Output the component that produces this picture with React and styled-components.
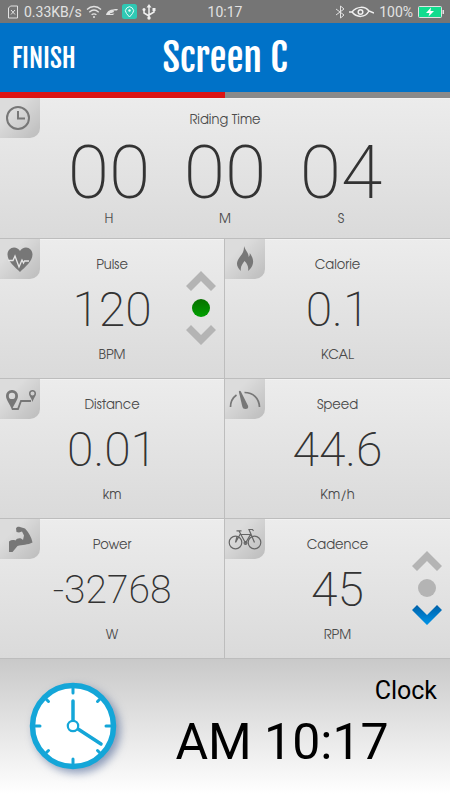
import styled, { createGlobalStyle } from "styled-components";

const GlobalStyle = createGlobalStyle`
  * {
    box-sizing: border-box;
  }

  body {
    margin: 0;
    background: #fff;
    font-family: Roboto, "Liberation Sans", sans-serif;
  }
`;

const Page = styled.div`
  display: flex;
  flex-direction: column;
  min-height: 100vh;
`;

const StatusBar = styled.div`
  display: grid;
  grid-template-columns: 1fr auto 1fr;
  align-items: center;
  height: 23px;
  padding: 0 6px;
  background: #757575;
  color: #e2e2e2;
  font-size: 14px;
  line-height: 22px;
`;

const StatusGroup = styled.div`
  display: flex;
  align-items: center;
  justify-content: ${({ $end }) => ($end ? "flex-end" : "flex-start")};
  gap: ${({ $end }) => ($end ? 3 : 4)}px;

  svg {
    flex: none;
  }
`;

const StatusText = styled.span`
  margin: 0 ${({ $side }) => $side || 0}px;
  white-space: nowrap;
`;

const Header = styled.header`
  display: grid;
  grid-template-columns: 1fr auto 1fr;
  align-items: center;
  height: 69px;
  padding: 0 12px;
  background: #0072c8;
  color: #fff;
`;

const FinishButton = styled.button`
  justify-self: start;
  padding: 0;
  border: none;
  background: none;
  color: inherit;
  font-family: "Fjalla One", "Roboto Condensed", Roboto, sans-serif;
  font-size: 26px;
  font-weight: 400;
  line-height: 32px;
  cursor: pointer;
`;

const Title = styled.h1`
  margin: 0;
  font-family: "Fjalla One", "Roboto Condensed", Roboto, sans-serif;
  font-size: 38px;
  font-weight: 400;
  line-height: 48px;
`;

const PageIndicator = styled.div`
  display: grid;
  grid-template-columns: 1fr 1fr;
  height: 6px;
`;

const PageMark = styled.span`
  background: ${({ $active }) => ($active ? "#dc1414" : "#8a8a8a")};
`;

const Grid = styled.main`
  display: grid;
  grid-template-columns: 1fr 1fr;
`;

const Cell = styled.section`
  display: grid;
  grid-template-columns: 40px 1fr 40px;
  grid-column: ${({ $wide }) => ($wide ? "1 / -1" : "auto")};
  min-height: ${({ $wide }) => ($wide ? 141 : 140)}px;
  border-bottom: 1px solid #bdbdbd;
  background: linear-gradient(#ececec, #dadada);
  box-shadow: inset 0 1px #f2f2f2;

  &:nth-child(even) {
    border-right: 1px solid #bdbdbd;
  }
`;

const Badge = styled.div`
  display: flex;
  align-items: center;
  justify-content: center;
  width: 40px;
  height: 40px;
  border-bottom-right-radius: 10px;
  background: linear-gradient(135deg, #dcdcdc 30%, #bcbcbc);
`;

const Readout = styled.div`
  display: flex;
  flex-direction: column;
  align-items: center;
  padding-top: ${({ $wide }) => ($wide ? 11 : 15)}px;
  color: #333;
`;

const Label = styled.div`
  color: #4c4c4c;
  font-family: "ITC Avant Garde Gothic", "URW Gothic", "TeX Gyre Adventor", "Century Gothic", Inter, sans-serif;
  font-size: 13px;
  font-weight: 300;
  line-height: 22px;
`;

const Value = styled.div`
  height: 68px;
  font-size: ${({ $small }) => ($small ? 39 : 48)}px;
  font-weight: 200;
  line-height: 68px;
`;

const TimeRow = styled.div`
  display: grid;
  grid-template-columns: repeat(3, 116px);
  text-align: center;
`;

const TimeValue = styled.div`
  height: 77px;
  font-size: 75px;
  font-weight: 200;
  line-height: 82px;
`;

const Trend = styled.div`
  display: flex;
  flex-direction: column;
  align-items: center;
  justify-content: center;
  gap: 8px;
  padding: 0 6px 2px 0;
`;

const Footer = styled.footer`
  display: flex;
  flex: 1;
  gap: 10px;
  min-height: 141px;
  padding: 16px 13px 0 29px;
  background: linear-gradient(#c9c9c9, #fff 96%);
`;

const ClockPanel = styled.div`
  display: flex;
  flex: 1;
  flex-direction: column;
  color: #000;
`;

const ClockLabel = styled.div`
  font-size: 25px;
  line-height: 32px;
  text-align: right;
`;

const ClockTime = styled.div`
  font-size: 50px;
  line-height: 70px;
  text-align: center;
  white-space: nowrap;
`;

const ClockFace = styled.svg`
  flex: none;
  margin-top: 7px;
  overflow: visible;
  filter: drop-shadow(4px 4px 4px rgba(40, 70, 130, 0.5));
`;

function TimeIcon() {
  return (
    <svg width="28" height="26" viewBox="0 0 28 26" fill="none" stroke="#777" strokeWidth="2">
      <circle cx="12" cy="13" r="11" />
      <path d="M12 6v7.500h7" />
    </svg>
  );
}

function HeartIcon() {
  return (
    <svg width="26" height="26" viewBox="0 0 26 26">
      <path
        d="M13 26C8 21 .5 15.500.5 8.500 .5 4.500 3.500 1.500 7 1.500c2.500 0 4.700 1.300 6 3.500 1.300-2.200 3.500-3.500 6-3.500 3.500 0 6.500 3 6.500 7C25.500 15.500 18 21 13 26z"
        fill="#777"
      />
      <path d="M1 14.500h5l2-4.500 4 11 3-7 1.500 3 1-2H22" fill="none" stroke="#e6e6e6" strokeWidth="1.300" />
    </svg>
  );
}

function FlameIcon() {
  return (
    <svg width="18" height="26" viewBox="0 0 18 26">
      <path
        d="M8 0c1.500 5 5 7 4.500 11 1.200-1 1.400-2.300 1.200-4 3 4 4.300 8 2.800 12-.7 2.200-2 4-4.500 6 .8-4-.5-7-3.500-10-1.800 3-4.500 5.500-3.500 10C1.500 22 .5 19 1.200 16 2.300 11 8.500 8 8 0z"
        fill="#777"
      />
    </svg>
  );
}

function RouteIcon() {
  return (
    <svg width="32" height="22" viewBox="0 0 32 22" fill="none">
      <path d="M8 21h6l3-8h10" stroke="#777" strokeWidth="1.800" />
      <path
        fillRule="evenodd"
        fill="#777"
        d="M8 2A5.700 5.700 0 0 0 2 8c0 4 4 8 6 14 2-6 6-10 6-14a5.700 5.700 0 0 0-6-6zm0 2.700a3.200 3.200 0 1 1 0 6.400 3.200 3.200 0 0 1 0-6.400z"
      />
      <path
        fillRule="evenodd"
        fill="#777"
        d="M28.500 2A3.500 3.500 0 0 0 25 5.700c0 2.300 2.500 4.300 3.500 8.300 1-4 3.500-6 3.500-8.300A3.500 3.500 0 0 0 28.500 2zm0 1.600a2 2 0 1 1 0 4 2 2 0 0 1 0-4z"
      />
    </svg>
  );
}

function GaugeIcon() {
  return (
    <svg width="32" height="22" viewBox="0 0 32 22" fill="none">
      <path d="M1.500 19C1.500 14 4 9.500 7.500 7M15.500 4.500C24 4.500 30 10 30.500 19" stroke="#777" strokeWidth="1.700" />
      <path d="M9.800 3.500c.5-1 1.700-.8 2.200.2l7 14c.8 2-.5 3.300-2.500 3.300-1.800 0-2.800-.8-3.200-2.500z" fill="#777" />
    </svg>
  );
}

function ArmIcon() {
  return (
    <svg width="26" height="26" viewBox="0 0 26 26">
      <path
        d="M9 2.500C9.500 1 11 .5 13 1l5 1.500c4 4 6.500 9 7.500 14C21 19 15 18.500 10.500 20L5.500 26H2V15.500c2-1.500 4-1.800 6.500-1 1.500-2.500 5.500-3 7.500-.5L17 9.500 15 5.500l-3 1-2.500-.5z"
        fill="#777"
      />
    </svg>
  );
}

function BikeIcon() {
  return (
    <svg width="34" height="22" viewBox="0 0 34 22" fill="none" stroke="#666" strokeWidth="1.200">
      <circle cx="7.500" cy="14.500" r="6.300" />
      <circle cx="26.500" cy="14.500" r="6.300" />
      <path d="M7.500 14.500L12 6.500h10.500L17.500 15 11 3M8.500 2.800h5M26.500 14.500L21 1.500h3.500l1 1.500M9 8.500l-1.500 6" />
      <circle cx="17.500" cy="15" r="1.400" />
    </svg>
  );
}

function TrendIndicator({ state }) {
  const idle = "#b4b4b4";

  return (
    <Trend>
      <svg width="30" height="20" viewBox="0 0 30 20">
        <path d="M15 0L30 15l-5 5-10-10L5 20l-5-5z" fill={idle} />
      </svg>
      <svg width="18" height="18" viewBox="0 0 18 18">
        <defs>
          <linearGradient id="steady" x1="0" y1="0" x2="0" y2="1">
            <stop stopColor="#087000" />
            <stop offset="1" stopColor="#00a000" />
          </linearGradient>
        </defs>
        <circle cx="9" cy="9" r="9" fill={state === "steady" ? "url(#steady)" : idle} />
      </svg>
      <svg width="30" height="20" viewBox="0 0 30 20">
        <defs>
          <linearGradient id="low" x1="0" y1="0" x2="0" y2="1">
            <stop stopColor="#0060a8" />
            <stop offset="1" stopColor="#0094e8" />
          </linearGradient>
        </defs>
        <path d="M15 20L0 5l5-5 10 10L25 0l5 5z" fill={state === "low" ? "url(#low)" : idle} />
      </svg>
    </Trend>
  );
}

const time = [
  { unit: "H", value: "00" },
  { unit: "M", value: "00" },
  { unit: "S", value: "04" },
];

const metrics = [
  { label: "Pulse", value: "120", unit: "BPM", Icon: HeartIcon, trend: "steady" },
  { label: "Calorie", value: "0.1", unit: "KCAL", Icon: FlameIcon },
  { label: "Distance", value: "0.01", unit: "km", Icon: RouteIcon },
  { label: "Speed", value: "44.6", unit: "Km/h", Icon: GaugeIcon },
  { label: "Power", value: "-32768", unit: "W", Icon: ArmIcon },
  { label: "Cadence", value: "45", unit: "RPM", Icon: BikeIcon, trend: "low" },
];

function PhoneStatus() {
  return (
    <StatusBar>
      <StatusGroup>
        <svg width="14" height="14" viewBox="0 0 14 14" fill="none" stroke="#e2e2e2">
          <path d="M4.500 1h7v12h-9V3zM5 5l4 4.500M9 5L5 9.500" />
        </svg>
        <StatusText>0.33KB/s</StatusText>
        <svg width="16" height="14" viewBox="0 0 16 14" fill="none" stroke="#e2e2e2" strokeWidth="1.300">
          <path d="M1 4.500c4-4 10-4 14 0M3.300 7.200c3-2.800 6.400-2.800 9.400 0M5.600 9.800c1.800-1.500 3-1.500 4.800 0" />
          <circle cx="8" cy="12" r="1" fill="#e2e2e2" stroke="none" />
        </svg>
        <svg width="12" height="10" viewBox="0 0 12 10">
          <path d="M0 8C1 4 4 2 12 2l-1 1.500H7.500L8 5 5.500 6H4l.5 1 4-.5L7 8z" fill="#e2e2e2" />
        </svg>
        <svg width="15" height="15" viewBox="0 0 15 15">
          <rect width="15" height="15" rx="2.500" fill="#2fc9b4" />
          <path d="M7.500 13L4.500 9.500a4 4 0 1 1 6 0z" fill="none" stroke="#e8fffb" />
          <circle cx="7.500" cy="6.500" r="1.200" fill="#e8fffb" />
        </svg>
        <svg width="16" height="16" viewBox="0 0 16 16" fill="none" stroke="#f0f0f0" strokeWidth="1.500">
          <path d="M8 2v12M8 12L3 9V6M8 11l5-3V5" />
          <path d="M8 0l2.500 3.500h-5z" fill="#f0f0f0" stroke="none" />
          <circle cx="8" cy="14" r="1.700" fill="#f0f0f0" stroke="none" />
          <circle cx="3" cy="5.500" r="1.500" fill="#f0f0f0" stroke="none" />
          <path d="M11.500 4h3v3h-3z" fill="#f0f0f0" stroke="none" />
        </svg>
      </StatusGroup>
      <StatusText>10:17</StatusText>
      <StatusGroup $end>
        <svg width="11" height="14" viewBox="0 0 11 14" fill="none" stroke="#e2e2e2">
          <path d="M1 4l8 6-3.500 3V1L9 4l-8 6" />
        </svg>
        <svg width="25" height="14" viewBox="0 0 25 14" fill="none" stroke="#f0f0f0" strokeWidth="1.500">
          <path d="M0 7h3c5-6 13-6 17-1l5 2M3 7c5 6 13 6 17-1" />
          <circle cx="11.500" cy="7" r="2.300" />
        </svg>
        <StatusText $side={2}>100%</StatusText>
        <svg width="26" height="12" viewBox="0 0 26 12">
          <rect x=".5" y=".5" width="23" height="11" rx="1" fill="#12dc8e" stroke="#e2e2e2" />
          <path d="M24.500 4h1.500v4h-1.500z" fill="#e2e2e2" />
          <path d="M13 1.500L8 7h3.500L10.500 10.500 16 5h-3.500z" fill="#fff" />
        </svg>
      </StatusGroup>
    </StatusBar>
  );
}

function WallClock() {
  return (
    <ClockFace width="88" height="88" viewBox="0 0 88 88" fill="none" stroke="#14a6d8">
      <circle cx="44" cy="44" r="40.500" fill="#fff" strokeWidth="5.500" />
      <g strokeWidth="3" strokeLinecap="round">
        <path d="M44 5v6M44 77v6M5 44h6M77 44h6M17 17l2.500 2.500M71 17l-2.500 2.500M17 71l2.500-2.500M71 71l-2.500-2.500" />
        <path d="M44 19v20M49 47l23 15" strokeWidth="3.500" />
      </g>
      <circle cx="44" cy="44" r="5.200" fill="#fff" strokeWidth="2.200" />
    </ClockFace>
  );
}

export default function App() {
  return (
    <Page>
      <GlobalStyle />
      <PhoneStatus />
      <Header>
        <FinishButton type="button">FINISH</FinishButton>
        <Title>Screen C</Title>
      </Header>
      <PageIndicator>
        <PageMark $active />
        <PageMark />
      </PageIndicator>
      <Grid>
        <Cell $wide>
          <Badge>
            <TimeIcon />
          </Badge>
          <Readout $wide>
            <Label>Riding Time</Label>
            <TimeRow>
              {time.map(({ unit, value }) => (
                <div key={unit}>
                  <TimeValue>{value}</TimeValue>
                  <Label>{unit}</Label>
                </div>
              ))}
            </TimeRow>
          </Readout>
        </Cell>
        {metrics.map(({ label, value, unit, Icon, trend }) => (
          <Cell key={label}>
            <Badge>
              <Icon />
            </Badge>
            <Readout>
              <Label>{label}</Label>
              <Value $small={value.length > 5}>{value}</Value>
              <Label>{unit}</Label>
            </Readout>
            {trend && <TrendIndicator state={trend} />}
          </Cell>
        ))}
      </Grid>
      <Footer>
        <WallClock />
        <ClockPanel>
          <ClockLabel>Clock</ClockLabel>
          <ClockTime>AM 10:17</ClockTime>
        </ClockPanel>
      </Footer>
    </Page>
  );
}
